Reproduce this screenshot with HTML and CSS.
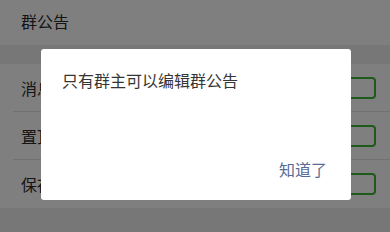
FILE: index.html
```html
<!DOCTYPE html>
<html lang="zh">

<head>
  <meta charset="UTF-8">
  <meta name="viewport" content="width=device-width, initial-scale=1.0">
  <title>群公告</title>
  <link rel="stylesheet" href="styles.css">
</head>

<body>
<div class="page">
  <div class="header">群公告</div>
  <div class="gap"></div>

  <div class="cells">
    <div class="cell">
      <div class="cell_body">
        <span class="cell_label">消息免打扰</span>
        <span class="switch"></span>
      </div>
    </div>
    <div class="cell">
      <div class="cell_body">
        <span class="cell_label">置顶聊天</span>
        <span class="switch"></span>
      </div>
    </div>
    <div class="cell last">
      <div class="cell_body">
        <span class="cell_label">保存到通讯录</span>
        <span class="switch"></span>
      </div>
    </div>
  </div>
  <div class="gap bottom"></div>
</div>

<div class="mask">
  <div class="dialog">
    <div class="dialog_text">只有群主可以编辑群公告</div>
    <div class="dialog_footer">
      <span class="dialog_btn">知道了</span>
    </div>
  </div>
</div>
</body>

</html>
```

FILE: styles.css
```css
* {
    box-sizing: border-box;
}

body {
    margin: 0;
    width: 390px;
    height: 232px;
    overflow: hidden;
    font-family: "Noto Sans CJK SC", "Noto Sans", sans-serif;
    font-size: 16px;
    color: #333333;
    background-color: #ededed;
}

.header {
    height: 45px;
    line-height: 43px;
    padding-left: 21px;
    background-color: #ffffff;
    color: #2a2a2a;
}

.gap {
    height: 19px;
    background-color: #eeeeee;
}

.gap.bottom {
    height: 24px;
}

.cells {
    background-color: #ffffff;
}

.cell {
    padding-left: 13px;
}

.cell_body {
    height: 48px;
    display: flex;
    align-items: center;
    justify-content: space-between;
    padding-left: 8px;
    padding-right: 14px;
    border-bottom: 1px solid #e2e2e2;
    color: #2a2a2a;
}

.cell.last .cell_body {
    border-bottom: none;
}

.switch {
    width: 52px;
    height: 22px;
    border: 2px solid #3fb534;
    border-radius: 4px;
    background-color: #ffffff;
}

.mask {
    position: fixed;
    top: 0;
    left: 0;
    right: 0;
    bottom: 0;
    background-color: rgba(0, 0, 0, 0.5);
    padding: 49px 0 0 41px;
}

.dialog {
    width: 310px;
    height: 151px;
    background-color: #ffffff;
    border-radius: 3px;
    display: flex;
    flex-direction: column;
    justify-content: space-between;
}

.dialog_text {
    padding: 20px 20px 0 21px;
    line-height: 22px;
    color: #353535;
}

.dialog_footer {
    display: flex;
    justify-content: flex-end;
    padding: 0 24px 20px 0;
    line-height: 22px;
}

.dialog_btn {
    color: #576b95;
}
```
